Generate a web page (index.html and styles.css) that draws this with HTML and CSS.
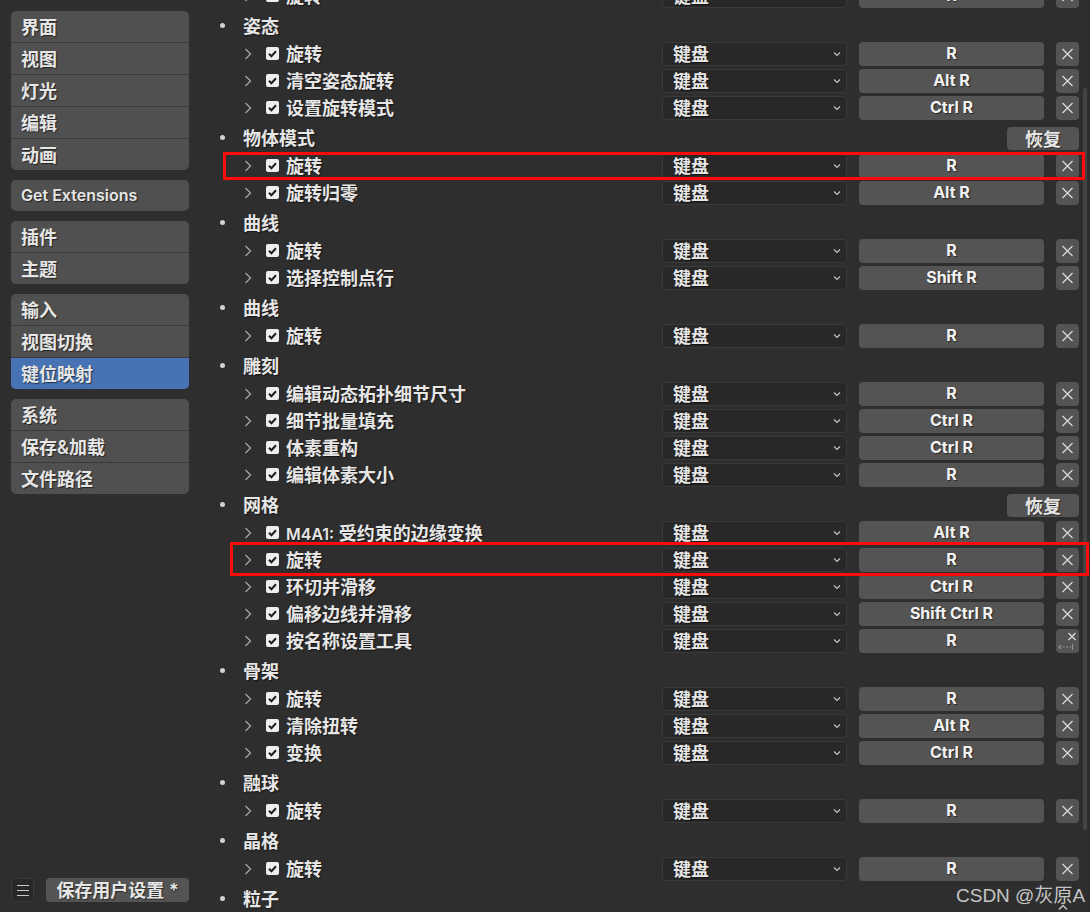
FILE: index.html
```html
<!DOCTYPE html>
<html>
<head>
    <meta charset="UTF-8">
    <title>偏好设置 - 键位映射</title>
    <link rel="stylesheet" href="styles.css">
</head>
<body>
    <svg class="defs" width="0" height="0">
        <symbol id="chev" viewBox="0 0 8 12"><path d="M1.5 1 L6.5 6 L1.5 11" fill="none" stroke="#a6a6a6" stroke-width="1.3"/></symbol>
        <symbol id="tick" viewBox="0 0 13 13"><path d="M3 6.8 L5.4 9.2 L10 4.2" fill="none" stroke="#1e1e1e" stroke-width="2"/></symbol>
        <symbol id="caret" viewBox="0 0 8 6"><path d="M1 1.5 L4 4.5 L7 1.5" fill="none" stroke="#c4c4c4" stroke-width="1.2"/></symbol>
        <symbol id="cross" viewBox="0 0 23 24"><path d="M6.5 7 L16.5 17 M16.5 7 L6.5 17" fill="none" stroke="#d8d8d8" stroke-width="1.3"/></symbol>
    </svg>

    <div class="sidebar">
        <div class="nav-group">
            <div class="nav-item">界面</div>
            <div class="nav-item">视图</div>
            <div class="nav-item">灯光</div>
            <div class="nav-item">编辑</div>
            <div class="nav-item">动画</div>
        </div>
        <div class="nav-group">
            <div class="nav-item latin">Get Extensions</div>
        </div>
        <div class="nav-group">
            <div class="nav-item">插件</div>
            <div class="nav-item">主题</div>
        </div>
        <div class="nav-group">
            <div class="nav-item">输入</div>
            <div class="nav-item">视图切换</div>
            <div class="nav-item active">键位映射</div>
        </div>
        <div class="nav-group">
            <div class="nav-item">系统</div>
            <div class="nav-item">保存&amp;加载</div>
            <div class="nav-item">文件路径</div>
        </div>

        <div class="sidebar-footer">
            <div class="menu-btn"><span></span><span></span><span></span></div>
            <div class="save-btn">保存用户设置 *</div>
        </div>
    </div>

    <div class="main">
        <!-- previous group, cut off at the top -->
        <div class="group">
            <div class="item">
                <svg class="chev"><use href="#chev"/></svg>
                <span class="check"><svg><use href="#tick"/></svg></span>
                <span class="name">旋转</span>
                <div class="select">键盘<svg class="caret"><use href="#caret"/></svg></div>
                <div class="key">R</div>
                <div class="remove"><svg><use href="#cross"/></svg></div>
            </div>
        </div>

        <div class="group">
            <div class="cat">姿态</div>
            <div class="item">
                <svg class="chev"><use href="#chev"/></svg>
                <span class="check"><svg><use href="#tick"/></svg></span>
                <span class="name">旋转</span>
                <div class="select">键盘<svg class="caret"><use href="#caret"/></svg></div>
                <div class="key">R</div>
                <div class="remove"><svg><use href="#cross"/></svg></div>
            </div>
            <div class="item">
                <svg class="chev"><use href="#chev"/></svg>
                <span class="check"><svg><use href="#tick"/></svg></span>
                <span class="name">清空姿态旋转</span>
                <div class="select">键盘<svg class="caret"><use href="#caret"/></svg></div>
                <div class="key">Alt R</div>
                <div class="remove"><svg><use href="#cross"/></svg></div>
            </div>
            <div class="item">
                <svg class="chev"><use href="#chev"/></svg>
                <span class="check"><svg><use href="#tick"/></svg></span>
                <span class="name">设置旋转模式</span>
                <div class="select">键盘<svg class="caret"><use href="#caret"/></svg></div>
                <div class="key">Ctrl R</div>
                <div class="remove"><svg><use href="#cross"/></svg></div>
            </div>
        </div>

        <div class="group">
            <div class="cat">物体模式<div class="reset">恢复</div></div>
            <div class="item">
                <svg class="chev"><use href="#chev"/></svg>
                <span class="check"><svg><use href="#tick"/></svg></span>
                <span class="name">旋转</span>
                <div class="select">键盘<svg class="caret"><use href="#caret"/></svg></div>
                <div class="key">R</div>
                <div class="remove"><svg><use href="#cross"/></svg></div>
            </div>
            <div class="item">
                <svg class="chev"><use href="#chev"/></svg>
                <span class="check"><svg><use href="#tick"/></svg></span>
                <span class="name">旋转归零</span>
                <div class="select">键盘<svg class="caret"><use href="#caret"/></svg></div>
                <div class="key">Alt R</div>
                <div class="remove"><svg><use href="#cross"/></svg></div>
            </div>
        </div>

        <div class="group">
            <div class="cat">曲线</div>
            <div class="item">
                <svg class="chev"><use href="#chev"/></svg>
                <span class="check"><svg><use href="#tick"/></svg></span>
                <span class="name">旋转</span>
                <div class="select">键盘<svg class="caret"><use href="#caret"/></svg></div>
                <div class="key">R</div>
                <div class="remove"><svg><use href="#cross"/></svg></div>
            </div>
            <div class="item">
                <svg class="chev"><use href="#chev"/></svg>
                <span class="check"><svg><use href="#tick"/></svg></span>
                <span class="name">选择控制点行</span>
                <div class="select">键盘<svg class="caret"><use href="#caret"/></svg></div>
                <div class="key">Shift R</div>
                <div class="remove"><svg><use href="#cross"/></svg></div>
            </div>
        </div>

        <div class="group">
            <div class="cat">曲线</div>
            <div class="item">
                <svg class="chev"><use href="#chev"/></svg>
                <span class="check"><svg><use href="#tick"/></svg></span>
                <span class="name">旋转</span>
                <div class="select">键盘<svg class="caret"><use href="#caret"/></svg></div>
                <div class="key">R</div>
                <div class="remove"><svg><use href="#cross"/></svg></div>
            </div>
        </div>

        <div class="group">
            <div class="cat">雕刻</div>
            <div class="item">
                <svg class="chev"><use href="#chev"/></svg>
                <span class="check"><svg><use href="#tick"/></svg></span>
                <span class="name">编辑动态拓扑细节尺寸</span>
                <div class="select">键盘<svg class="caret"><use href="#caret"/></svg></div>
                <div class="key">R</div>
                <div class="remove"><svg><use href="#cross"/></svg></div>
            </div>
            <div class="item">
                <svg class="chev"><use href="#chev"/></svg>
                <span class="check"><svg><use href="#tick"/></svg></span>
                <span class="name">细节批量填充</span>
                <div class="select">键盘<svg class="caret"><use href="#caret"/></svg></div>
                <div class="key">Ctrl R</div>
                <div class="remove"><svg><use href="#cross"/></svg></div>
            </div>
            <div class="item">
                <svg class="chev"><use href="#chev"/></svg>
                <span class="check"><svg><use href="#tick"/></svg></span>
                <span class="name">体素重构</span>
                <div class="select">键盘<svg class="caret"><use href="#caret"/></svg></div>
                <div class="key">Ctrl R</div>
                <div class="remove"><svg><use href="#cross"/></svg></div>
            </div>
            <div class="item">
                <svg class="chev"><use href="#chev"/></svg>
                <span class="check"><svg><use href="#tick"/></svg></span>
                <span class="name">编辑体素大小</span>
                <div class="select">键盘<svg class="caret"><use href="#caret"/></svg></div>
                <div class="key">R</div>
                <div class="remove"><svg><use href="#cross"/></svg></div>
            </div>
        </div>

        <div class="group">
            <div class="cat">网格<div class="reset">恢复</div></div>
            <div class="item">
                <svg class="chev"><use href="#chev"/></svg>
                <span class="check"><svg><use href="#tick"/></svg></span>
                <span class="name"><span class="latin">M4A1:</span> 受约束的边缘变换</span>
                <div class="select">键盘<svg class="caret"><use href="#caret"/></svg></div>
                <div class="key">Alt R</div>
                <div class="remove"><svg><use href="#cross"/></svg></div>
            </div>
            <div class="item">
                <svg class="chev"><use href="#chev"/></svg>
                <span class="check"><svg><use href="#tick"/></svg></span>
                <span class="name">旋转</span>
                <div class="select">键盘<svg class="caret"><use href="#caret"/></svg></div>
                <div class="key">R</div>
                <div class="remove"><svg><use href="#cross"/></svg></div>
            </div>
            <div class="item">
                <svg class="chev"><use href="#chev"/></svg>
                <span class="check"><svg><use href="#tick"/></svg></span>
                <span class="name">环切并滑移</span>
                <div class="select">键盘<svg class="caret"><use href="#caret"/></svg></div>
                <div class="key">Ctrl R</div>
                <div class="remove"><svg><use href="#cross"/></svg></div>
            </div>
            <div class="item">
                <svg class="chev"><use href="#chev"/></svg>
                <span class="check"><svg><use href="#tick"/></svg></span>
                <span class="name">偏移边线并滑移</span>
                <div class="select">键盘<svg class="caret"><use href="#caret"/></svg></div>
                <div class="key">Shift Ctrl R</div>
                <div class="remove"><svg><use href="#cross"/></svg></div>
            </div>
            <div class="item">
                <svg class="chev"><use href="#chev"/></svg>
                <span class="check"><svg><use href="#tick"/></svg></span>
                <span class="name">按名称设置工具</span>
                <div class="select">键盘<svg class="caret"><use href="#caret"/></svg></div>
                <div class="key">R</div>
                <div class="remove">
                    <svg viewBox="0 0 23 24">
                        <path d="M12.5 4 L19.5 11 M19.5 4 L12.5 11" fill="none" stroke="#d8d8d8" stroke-width="1.3"/>
                        <path d="M5 16 L2.5 18 L5 20" fill="none" stroke="#9a9a9a" stroke-width="1"/>
                        <path d="M3 18 H15" fill="none" stroke="#9a9a9a" stroke-width="1" stroke-dasharray="2 1.5"/>
                        <path d="M16.5 15 V21" fill="none" stroke="#9a9a9a" stroke-width="1"/>
                    </svg>
                </div>
            </div>
        </div>

        <div class="group">
            <div class="cat">骨架</div>
            <div class="item">
                <svg class="chev"><use href="#chev"/></svg>
                <span class="check"><svg><use href="#tick"/></svg></span>
                <span class="name">旋转</span>
                <div class="select">键盘<svg class="caret"><use href="#caret"/></svg></div>
                <div class="key">R</div>
                <div class="remove"><svg><use href="#cross"/></svg></div>
            </div>
            <div class="item">
                <svg class="chev"><use href="#chev"/></svg>
                <span class="check"><svg><use href="#tick"/></svg></span>
                <span class="name">清除扭转</span>
                <div class="select">键盘<svg class="caret"><use href="#caret"/></svg></div>
                <div class="key">Alt R</div>
                <div class="remove"><svg><use href="#cross"/></svg></div>
            </div>
            <div class="item">
                <svg class="chev"><use href="#chev"/></svg>
                <span class="check"><svg><use href="#tick"/></svg></span>
                <span class="name">变换</span>
                <div class="select">键盘<svg class="caret"><use href="#caret"/></svg></div>
                <div class="key">Ctrl R</div>
                <div class="remove"><svg><use href="#cross"/></svg></div>
            </div>
        </div>

        <div class="group">
            <div class="cat">融球</div>
            <div class="item">
                <svg class="chev"><use href="#chev"/></svg>
                <span class="check"><svg><use href="#tick"/></svg></span>
                <span class="name">旋转</span>
                <div class="select">键盘<svg class="caret"><use href="#caret"/></svg></div>
                <div class="key">R</div>
                <div class="remove"><svg><use href="#cross"/></svg></div>
            </div>
        </div>

        <div class="group">
            <div class="cat">晶格</div>
            <div class="item">
                <svg class="chev"><use href="#chev"/></svg>
                <span class="check"><svg><use href="#tick"/></svg></span>
                <span class="name">旋转</span>
                <div class="select">键盘<svg class="caret"><use href="#caret"/></svg></div>
                <div class="key">R</div>
                <div class="remove"><svg><use href="#cross"/></svg></div>
            </div>
        </div>

        <div class="group">
            <div class="cat">粒子</div>
        </div>
    </div>

    <!-- overlays -->
    <div class="scrollbar"></div>
    <div class="mark mark-1"></div>
    <div class="mark mark-2"></div>
    <div class="watermark">CSDN @灰原A</div>
    <svg class="scroll-up" viewBox="0 0 12 8"><path d="M2 6.5 L6 2.5 L10 6.5" fill="none" stroke="#c8c8c8" stroke-width="1.4"/></svg>
</body>
</html>
```

FILE: styles.css
```css
* {
    margin: 0;
    padding: 0;
    box-sizing: border-box;
}

body {
    width: 1090px;
    height: 912px;
    overflow: hidden;
    position: relative;
    display: flex;
    background: #2e2e2e;
    color: #e6e6e6;
    font-family: "Inter", "Noto Sans CJK SC", sans-serif;
    font-size: 18px;
    font-weight: 600;
    text-shadow: 1px 1px 1px rgba(0, 0, 0, 0.55);
}

.latin {
    font-size: 16px;
}

.defs {
    position: absolute;
}

/* ---------- sidebar ---------- */

.sidebar {
    width: 200px;
    flex-shrink: 0;
    padding: 11px 11px 10px;
    display: flex;
    flex-direction: column;
    gap: 10px;
}

.nav-group {
    background: #505050;
    border-radius: 5px;
    overflow: hidden;
}

.nav-item {
    height: 32px;
    padding-left: 10px;
    padding-bottom: 2px;
    display: flex;
    align-items: center;
    border-top: 1px solid #3a3a3a;
}

.nav-item:first-child {
    height: 31px;
    border-top: none;
}

.nav-item.active {
    background: #4772b3;
}

.sidebar-footer {
    margin-top: auto;
    display: flex;
    gap: 12px;
    height: 24px;
}

.menu-btn {
    width: 23px;
    background: #282828;
    border: 1px solid #3a3a3a;
    border-radius: 4px;
    display: flex;
    flex-direction: column;
    align-items: center;
    justify-content: center;
    gap: 4px;
}

.menu-btn span {
    width: 12px;
    height: 1px;
    background: #c8c8c8;
}

.save-btn {
    flex: 1;
    background: #545454;
    border-radius: 4px;
    padding-bottom: 3px;
    display: flex;
    align-items: center;
    justify-content: center;
}

/* ---------- keymap list ---------- */

.main {
    flex: 1;
    margin-top: -18px;
    padding-right: 11px;
}

.group {
    margin-bottom: 4px;
}

.cat {
    height: 27px;
    padding-bottom: 3px;
    display: flex;
    align-items: center;
}

.cat::before {
    content: '';
    width: 5px;
    height: 5px;
    border-radius: 50%;
    background: #d2d2d2;
    margin-left: 20px;
    margin-right: 18px;
}

.reset {
    margin-left: auto;
    width: 72px;
    height: 23px;
    margin-top: 3px;
    background: #545454;
    border-radius: 4px;
    padding-bottom: 2px;
    display: flex;
    align-items: center;
    justify-content: center;
}

.item {
    height: 27px;
    display: flex;
    align-items: center;
}

.chev {
    width: 8px;
    height: 12px;
    margin-left: 44px;
}

.check {
    width: 13px;
    height: 13px;
    margin-left: 14px;
    background: #eeeeee;
    border-radius: 2px;
    display: flex;
}

.check svg {
    width: 13px;
    height: 13px;
}

.name {
    flex: 1;
    margin-left: 7px;
    margin-bottom: 2px;
    white-space: nowrap;
}

.select {
    width: 185px;
    height: 24px;
    background: #282828;
    border: 1px solid #3a3a3a;
    border-radius: 4px;
    padding: 0 5px 1px 10px;
    display: flex;
    align-items: center;
    justify-content: space-between;
}

.caret {
    width: 8px;
    height: 6px;
    margin-top: 2px;
}

.key {
    width: 185px;
    height: 24px;
    margin-left: 12px;
    background: #545454;
    border-radius: 4px;
    padding-bottom: 2px;
    display: flex;
    align-items: center;
    justify-content: center;
    font-size: 16px;
    font-weight: 700;
    color: #f2f2f2;
}

.remove {
    width: 23px;
    height: 24px;
    margin-left: 12px;
    background: #545454;
    border-radius: 4px;
    display: flex;
}

.remove svg {
    width: 23px;
    height: 24px;
}

/* ---------- overlays ---------- */

.scrollbar {
    position: absolute;
    left: 1083px;
    top: 88px;
    width: 4px;
    height: 742px;
    border-radius: 2px;
    background: #444444;
}

.mark {
    position: absolute;
    border: 3px solid #ff0a0a;
}

.mark-1 {
    left: 223px;
    top: 152px;
    width: 862px;
    height: 28px;
}

.mark-2 {
    left: 230px;
    top: 542px;
    width: 859px;
    height: 34px;
}

.watermark {
    position: absolute;
    left: 956px;
    top: 885px;
    font-family: "Liberation Sans", "Noto Sans CJK SC", sans-serif;
    font-size: 19px;
    font-weight: 400;
    line-height: 22px;
    color: rgba(225, 225, 225, 0.85);
    text-shadow: none;
}

.scroll-up {
    position: absolute;
    left: 1057px;
    top: 903px;
    width: 12px;
    height: 8px;
}
```
